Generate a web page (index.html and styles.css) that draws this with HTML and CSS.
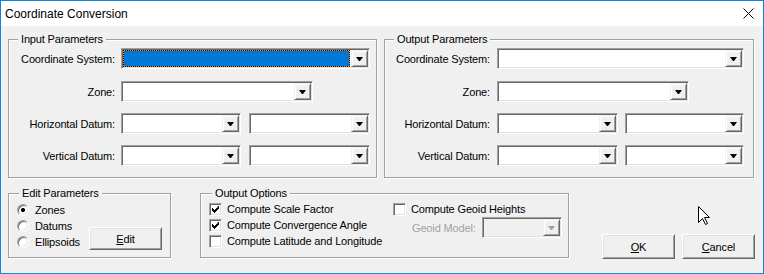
FILE: index.html
```html
<!DOCTYPE html>
<html>
<head>
<meta charset="utf-8">
<title>Coordinate Conversion</title>
<link rel="stylesheet" href="styles.css">
</head>
<body>
<div class="window">
  <div class="titlebar">
    <span class="title">Coordinate Conversion</span>
    <svg class="close" width="11" height="11" viewBox="0 0 11 11"><path d="M0.5 0.5 L10.5 10.5 M10.5 0.5 L0.5 10.5" stroke="#000" stroke-width="1" fill="none"/></svg>
  </div>
  <div class="content">
    <div class="toprow">
      <fieldset class="group params in">
        <legend>Input Parameters</legend>
        <div class="row first">
          <span class="lbl">Coordinate System:</span>
          <div class="combo focus cs"><span class="field"></span><span class="drop"><i class="arrow"></i></span></div>
        </div>
        <div class="row">
          <span class="lbl">Zone:</span>
          <div class="combo zone"><span class="field"></span><span class="drop"><i class="arrow"></i></span></div>
        </div>
        <div class="row">
          <span class="lbl">Horizontal Datum:</span>
          <div class="combo d1"><span class="field"></span><span class="drop"><i class="arrow"></i></span></div>
          <div class="combo d2"><span class="field"></span><span class="drop"><i class="arrow"></i></span></div>
        </div>
        <div class="row">
          <span class="lbl">Vertical Datum:</span>
          <div class="combo d1"><span class="field"></span><span class="drop"><i class="arrow"></i></span></div>
          <div class="combo d2"><span class="field"></span><span class="drop"><i class="arrow"></i></span></div>
        </div>
      </fieldset>
      <fieldset class="group params out">
        <legend>Output Parameters</legend>
        <div class="row first">
          <span class="lbl">Coordinate System:</span>
          <div class="combo cs"><span class="field"></span><span class="drop"><i class="arrow"></i></span></div>
        </div>
        <div class="row">
          <span class="lbl">Zone:</span>
          <div class="combo zone"><span class="field"></span><span class="drop"><i class="arrow"></i></span></div>
        </div>
        <div class="row">
          <span class="lbl">Horizontal Datum:</span>
          <div class="combo d1"><span class="field"></span><span class="drop"><i class="arrow"></i></span></div>
          <div class="combo d2"><span class="field"></span><span class="drop"><i class="arrow"></i></span></div>
        </div>
        <div class="row">
          <span class="lbl">Vertical Datum:</span>
          <div class="combo d1"><span class="field"></span><span class="drop"><i class="arrow"></i></span></div>
          <div class="combo d2"><span class="field"></span><span class="drop"><i class="arrow"></i></span></div>
        </div>
      </fieldset>
    </div>
    <div class="bottomrow">
      <fieldset class="group edit">
        <legend>Edit Parameters</legend>
        <div class="radios">
          <div class="opt"><span class="radio checked"></span><span>Zones</span></div>
          <div class="opt"><span class="radio"></span><span>Datums</span></div>
          <div class="opt"><span class="radio"></span><span>Ellipsoids</span></div>
        </div>
        <div class="btn editbtn"><span><u>E</u>dit</span></div>
      </fieldset>
      <fieldset class="group options">
        <legend>Output Options</legend>
        <div class="optgrid">
          <div class="opt"><span class="check"><svg width="7" height="7" viewBox="0 0 7 7"><path d="M6 0h1v3h-1v1h-1v1h-1v1h-1v1h-1v-1h-1v-1h-1v-3h1v1h1v1h1v-1h1v-1h1z" fill="#000"/></svg></span><span>Compute Scale Factor</span></div>
          <div class="opt col2"><span class="check"></span><span>Compute Geoid Heights</span></div>
          <div class="opt"><span class="check"><svg width="7" height="7" viewBox="0 0 7 7"><path d="M6 0h1v3h-1v1h-1v1h-1v1h-1v1h-1v-1h-1v-1h-1v-3h1v1h1v1h1v-1h1v-1h1z" fill="#000"/></svg></span><span>Compute Convergence Angle</span></div>
          <div class="geoid col2">
            <span class="disabled-lbl">Geoid Model:</span>
            <div class="combo disabled geo"><span class="field"></span><span class="drop"><i class="arrow"></i></span></div>
          </div>
          <div class="opt"><span class="check"></span><span>Compute Latitude and Longitude</span></div>
        </div>
      </fieldset>
      <div class="actions">
        <div class="btn"><span><u>O</u>K</span></div>
        <div class="btn"><span><u>C</u>ancel</span></div>
      </div>
    </div>
  </div>
  <svg class="cursor" width="13" height="20" viewBox="0 0 13 20"><path d="M0.5 0.5 V16.5 L4.5 12.5 L7.5 18.5 L9.5 17.5 L6.5 11.5 H11.5 Z" fill="#fff" stroke="#000" stroke-width="1" stroke-linejoin="miter"/></svg>
</div>
</body>
</html>
```
FILE: styles.css
```css
html, body {
  margin: 0;
  padding: 0;
  background: #f0f0f0;
}
.window {
  position: relative;
  width: 764px;
  height: 274px;
  box-sizing: border-box;
  border: 1px solid #1883d7;
  background: #f0f0f0;
  font-family: "Liberation Sans", Arial, sans-serif;
  font-size: 11px;
  letter-spacing: -0.15px;
  color: #000;
  display: flex;
  flex-direction: column;
}
.titlebar {
  height: 25px;
  flex: none;
  background: #fff;
  display: flex;
  align-items: center;
  justify-content: space-between;
  padding: 0 9px 0 4px;
}
.title {
  font-size: 12px;
  letter-spacing: 0;
  font-family: "Liberation Sans", Arial, sans-serif;
}
.close { display: block; }
.content {
  flex: 1;
  padding: 7px 8px 0 7px;
}
.toprow {
  display: flex;
  align-items: flex-start;
}
.group {
  margin: 0;
  min-width: 0;
  box-sizing: border-box;
  border: 1px solid #a0a0a0;
  box-shadow: 1px 1px 0 #fff, inset 1px 1px 0 #fff;
}
.group legend {
  padding: 0 3px;
  margin-left: 9px;
  line-height: 13px;
  background: #f0f0f0;
  white-space: nowrap;
}
.params {
  padding: 2px 0 11px 0;
  display: flex;
  flex-direction: column;
  gap: 11px;
}
.params.in { width: 369px; margin-right: 7px; }
.params.out { width: 370px; }
.params .row.first { margin-bottom: 1px; }
.row {
  display: flex;
  align-items: center;
  height: 21px;
}
.lbl {
  text-align: right;
  white-space: nowrap;
}
.in .lbl { width: 106px; margin-right: 6px; }
.out .lbl { width: 105px; margin-right: 7px; }
.combo {
  display: flex;
  height: 21px;
  flex: none;
  box-sizing: border-box;
  border: 1px solid;
  border-color: #a0a0a0 #fff #fff #a0a0a0;
  box-shadow: inset 1px 1px 0 #696969, inset -1px -1px 0 #e3e3e3;
  background: #fff;
  padding: 1px;
}
.combo .field { flex: 1; }
.combo .drop {
  width: 17px;
  box-sizing: border-box;
  background: #f0f0f0;
  border: 1px solid;
  border-color: #f0f0f0 #696969 #696969 #f0f0f0;
  box-shadow: inset 1px 1px 0 #fff, inset -1px -1px 0 #a0a0a0;
  display: flex;
  align-items: center;
  justify-content: center;
}
.arrow {
  display: block;
  width: 1px;
  height: 0;
  border-top: 4px solid #000;
  border-left: 3px solid transparent;
  border-right: 3px solid transparent;
  margin-top: 1px;
}
.combo.focus .field {
  border: 1px dotted #000;
  margin-right: 1px;
  background: linear-gradient(#0078d7, #0078d7) padding-box, linear-gradient(#ff8c28, #ff8c28) border-box;
}
.combo.disabled { background: #f0f0f0; }
.combo.disabled .arrow { border-top-color: #a0a0a0; }
.in .cs { width: 249px; }
.in .zone { width: 192px; }
.in .d1 { width: 120px; margin-right: 8px; }
.in .d2 { width: 121px; }
.out .cs { width: 247px; }
.out .zone { width: 192px; }
.out .d1 { width: 121px; margin-right: 7px; }
.out .d2 { width: 119px; }

.bottomrow {
  display: flex;
  align-items: flex-start;
  margin-top: 9px;
}
.edit {
  width: 163px;
  padding: 2px 8px 7px 8px;
  display: flex;
  align-items: flex-end;
}
.edit legend { margin-left: 2px; }
.radios { display: flex; flex-direction: column; }
.opt {
  display: flex;
  align-items: center;
  height: 16px;
  white-space: nowrap;
}
.radio {
  width: 12px;
  height: 12px;
  box-sizing: border-box;
  border-radius: 50%;
  border: 1px solid;
  border-color: #a0a0a0 #fff #fff #a0a0a0;
  box-shadow: inset 1px 1px 0 #696969, inset -1px -1px 0 #e3e3e3;
  background: #fff;
  margin-right: 6px;
  flex: none;
}
.radio.checked {
  background: radial-gradient(circle, #000 0, #000 1.8px, #fff 2.3px);
}
.btn {
  box-sizing: border-box;
  background: #f0f0f0;
  border: 1px solid;
  border-color: #fff #696969 #696969 #fff;
  box-shadow: inset 1px 1px 0 #e3e3e3, inset -1px -1px 0 #a0a0a0;
  display: flex;
  align-items: center;
  justify-content: center;
  width: 73px;
  height: 25px;
}
.editbtn {
  margin-left: auto;
  height: 23px;
}
.options {
  width: 369px;
  margin-left: 29px;
  padding: 1px 8px 8px 8px;
}
.options legend { margin-left: 3px; }
.optgrid {
  display: grid;
  grid-template-columns: 184px 1fr;
  grid-template-rows: 16px 16px 16px;
}
.check {
  width: 13px;
  height: 13px;
  box-sizing: border-box;
  border: 1px solid;
  border-color: #a0a0a0 #fff #fff #a0a0a0;
  box-shadow: inset 1px 1px 0 #696969, inset -1px -1px 0 #e3e3e3;
  background: #fff;
  margin-right: 5px;
  flex: none;
  display: flex;
  align-items: center;
  justify-content: center;
}
.check svg { display: block; }
.geoid {
  display: flex;
  align-items: center;
  height: 21px;
  padding-left: 19px;
  white-space: nowrap;
}
.disabled-lbl {
  color: #a0a0a0;
  margin-right: 6px;
  white-space: nowrap;
}
.geo { width: 80px; }
.actions {
  margin-left: auto;
  margin-top: 47px;
  display: flex;
  gap: 7px;
}
.cursor {
  position: absolute;
  left: 697px;
  top: 205px;
}
```
